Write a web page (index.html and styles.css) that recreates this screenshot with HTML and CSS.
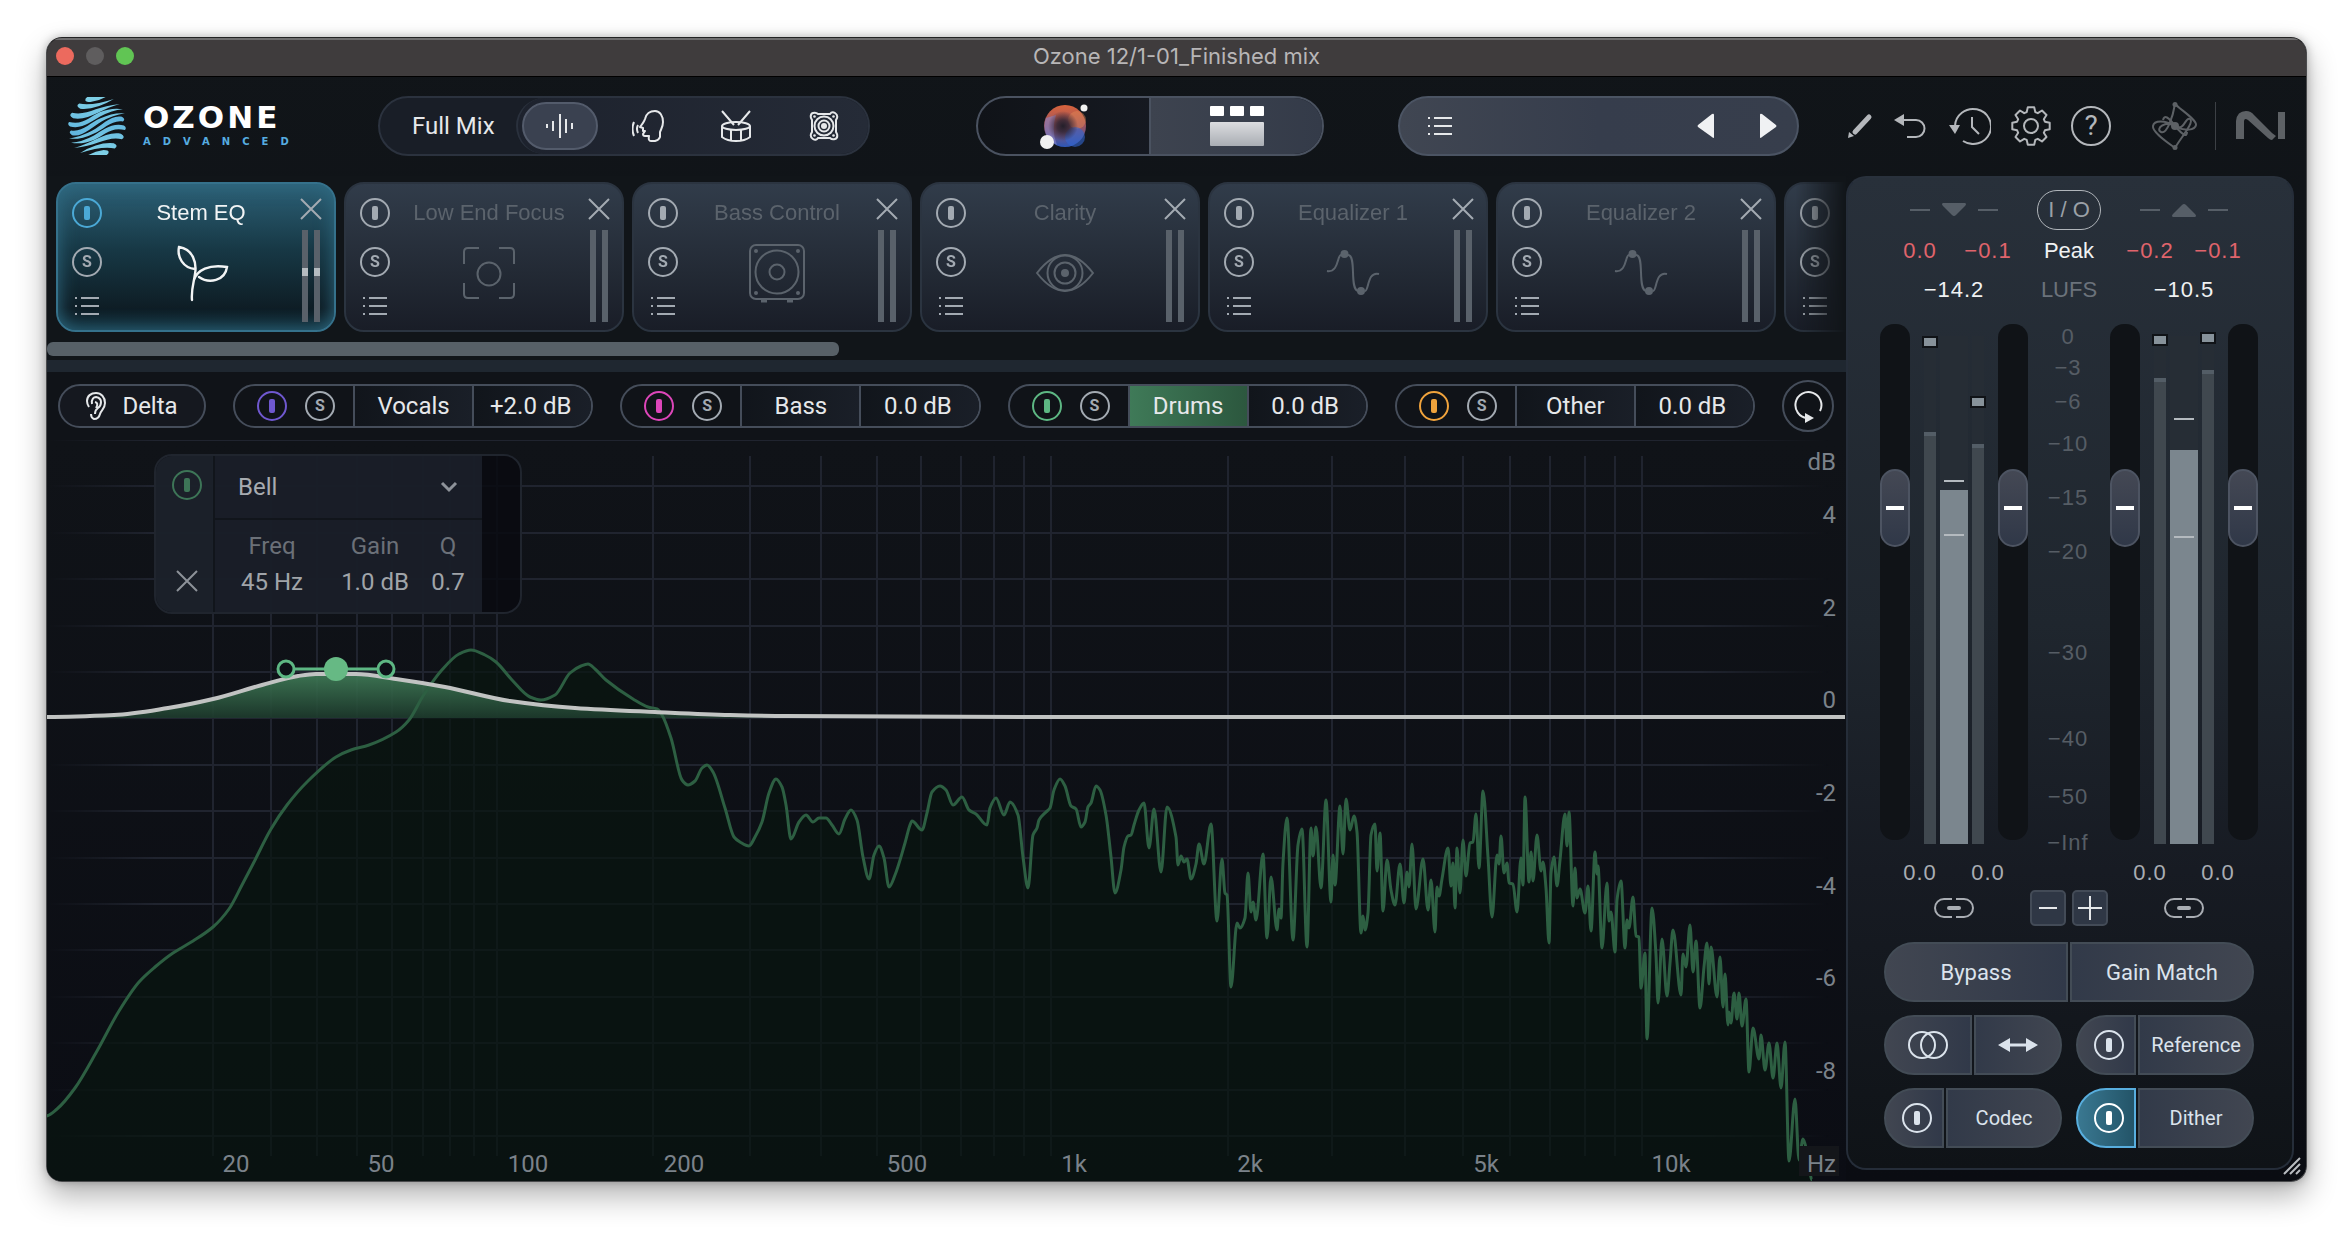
FILE: index.html
```
<!DOCTYPE html>
<html lang="en">
<head>
  <meta charset="UTF-8" />
  <meta name="viewport" content="width=device-width, initial-scale=1.0"/>
  <title>Ozone 12/1-01_Finished mix</title>
  <link rel="stylesheet" href="styles.css">
</head>
<body>
  <svg class="defs" aria-hidden="true">
    <symbol id="i-list" viewBox="0 0 24 20"><path d="M0 2h2M6 2h18M0 10h2M6 10h18M0 18h2M6 18h18" stroke="currentColor" stroke-width="2"/></symbol>
    <symbol id="i-close" viewBox="0 0 22 22"><path d="M1 1l20 20M21 1L1 21" stroke="currentColor" stroke-width="2"/></symbol>
    <symbol id="i-leaf" viewBox="0 0 60 60"><path d="M21 57C20 46 23 39 24 31C26 20 22 6 8 4C6 14 12 25 24 26M23 37C26 27 38 21 56 24C54 38 38 41 28 34" fill="none" stroke="currentColor" stroke-width="2.4" stroke-linecap="round"/></symbol>
    <symbol id="i-focus" viewBox="0 0 60 60"><g fill="none" stroke="currentColor" stroke-width="2"><path d="M5 21V9q0-4 4-4h11M40 5h11q4 0 4 4v12M55 40v11q0 4-4 4H40M20 55H9q-4 0-4-4V40"/><circle cx="30" cy="31" r="11.500"/></g></symbol>
    <symbol id="i-box" viewBox="0 0 60 60"><g fill="none" stroke="currentColor" stroke-width="2"><rect x="3" y="2" width="54" height="54" rx="6"/><circle cx="30" cy="29" r="21.500"/><circle cx="30" cy="29" r="7.500"/><path d="M14 58h6M40 58h6" stroke-width="3"/></g><g fill="currentColor"><circle cx="9" cy="8" r="2"/><circle cx="51" cy="8" r="2"/><circle cx="9" cy="50" r="2"/><circle cx="51" cy="50" r="2"/></g></symbol>
    <symbol id="i-eye" viewBox="0 0 60 60"><g fill="none" stroke="currentColor" stroke-width="2"><path d="M2 30Q16 12 30 12T58 30Q44 48 30 48T2 30z"/><circle cx="30" cy="30" r="17.500"/><circle cx="30" cy="30" r="10.500"/></g><circle cx="30" cy="30" r="4" fill="currentColor"/></symbol>
    <symbol id="i-eq" viewBox="0 0 60 60"><path d="M4 28C16 30 14 12 18 12M25 12C34 12 26 46 35 48M42 48C46 48 44 28 56 31" fill="none" stroke="currentColor" stroke-width="2"/><circle cx="21.500" cy="11" r="4" fill="currentColor"/><circle cx="38" cy="48" r="4" fill="currentColor"/></symbol>
    <symbol id="i-link" viewBox="0 0 40 20"><path d="M18 1h-8a9 9 0 0 0 0 18h8M22 1h8a9 9 0 0 1 0 18h-8" fill="none" stroke="currentColor" stroke-width="2"/><rect x="13" y="8" width="14" height="4" rx="2" fill="currentColor"/></symbol>
  </svg>

  <div class="window">
    <div class="titlebar">
      <div class="lights">
        <button class="light red" aria-label="Close window"></button>
        <button class="light gray" aria-label="Minimize window"></button>
        <button class="light green" aria-label="Zoom window"></button>
      </div>
      <span class="window-title">Ozone 12/1-01_Finished mix</span>
    </div>

    <header class="header">
      <div class="brand">
        <svg width="58" height="58" viewBox="0 0 57 57" aria-hidden="true">
          <defs>
            <linearGradient id="sphere" gradientUnits="userSpaceOnUse" x1="0" y1="0" x2="0" y2="57"><stop offset="0" stop-color="#7fd0e6"/><stop offset="1" stop-color="#4fa6da"/></linearGradient>
            <g id="waves">
              <path d="M19 0H37Q30 4 22 5Q17 5 17 3Q17 1 19 0z"/>
              <path d="M11 6.500Q24 9 45 2Q27 13 12 11.500Q7 9 11 6.500z"/>
              <path d="M4 15.500C18 19 28 9 51 7C34 11 20 24 5 21Q0 18 4 15.500z"/>
              <path d="M1 24.500C15 28 22 19 31 15Q43 10 54 12Q43 13 32 19C23 24 14 32 2 29Q-1 27 1 24.500z"/>
              <path d="M3 33C14 35 22 25 32 21Q44 15 56 16Q44 18 33 24C24 29 14 40 4 37.500Q0 35 3 33z"/>
            </g>
          </defs>
          <g fill="url(#sphere)"><use href="#waves"/><use href="#waves" transform="rotate(180 28.500 28.500)"/></g>
        </svg>
        <div class="brand-text">
          <span class="brand-name">OZONE</span>
          <span class="brand-tier">ADVANCED</span>
        </div>
      </div>

      <div class="stem-select">
        <span class="stem-label">Full Mix</span>
        <div class="stem-icons">
          <button class="stem-btn selected" aria-label="Full mix"><svg width="28" height="26" viewBox="0 0 28 26"><path d="M1 11v4M7 8v10M14 1v24M20 6v14M26 10v6" stroke="currentColor" stroke-width="2"/></svg></button>
          <button class="stem-btn" aria-label="Vocals"><svg width="32" height="32" viewBox="0 0 32 32"><path d="M13 9C14 4 18 1 23 1C28 1 31 6 31 12C31 17 29 19 28 22V27Q27 30 23 31H19Q16 31 17 26H13Q11 26 11 24L13 21L11 21V18L8 17Q12 12 13 9zM6 15q-2 4 0 8M2 12q-3 7 0 14" fill="none" stroke="currentColor" stroke-width="2" stroke-linejoin="round"/></svg></button>
          <button class="stem-btn" aria-label="Drums"><svg width="32" height="32" viewBox="0 0 32 32"><g fill="none" stroke="currentColor" stroke-width="2"><ellipse cx="16" cy="16" rx="14" ry="4"/><path d="M2 16v11q5 4 14 4t14-4V16M11 20v10M21 20v10M2 1l12 14M30 1L18 15"/></g></svg></button>
          <button class="stem-btn" aria-label="Bass"><svg width="30" height="30" viewBox="0 0 30 30"><g fill="none" stroke="currentColor" stroke-width="2"><path d="M9 3h12q2-3 5-1t2 5l-1 2v12l1 2q1 4-2 5t-5-1H9q-2 3-5 1t-2-5l1-2V9L2 7Q1 3 4 2t5 1z"/><circle cx="15" cy="15" r="9.500"/><circle cx="15" cy="15" r="5.500"/></g><circle cx="15" cy="15" r="3" fill="currentColor"/><g fill="currentColor"><circle cx="5.500" cy="5.500" r="1.300"/><circle cx="24.500" cy="5.500" r="1.300"/><circle cx="5.500" cy="24.500" r="1.300"/><circle cx="24.500" cy="24.500" r="1.300"/></g></svg></button>
        </div>
      </div>

      <div class="view-toggle">
        <button class="view-btn" aria-label="Assistant view">
          <svg width="50" height="48" viewBox="0 0 50 48">
            <defs>
              <linearGradient id="orb" x1="0" y1="0" x2="0" y2="1"><stop offset="0" stop-color="#d9643c"/><stop offset=".5" stop-color="#9a5360"/><stop offset="1" stop-color="#2c57b8"/></linearGradient>
              <radialGradient id="orb-core"><stop offset="0" stop-color="#231f2a"/><stop offset=".4" stop-color="#2a2230" stop-opacity=".8"/><stop offset="1" stop-color="#2a2230" stop-opacity="0"/></radialGradient>
            </defs>
            <circle cx="26" cy="24" r="21" fill="url(#orb)"/><circle cx="38" cy="18" r="9" fill="#e58a55" opacity=".45"/><circle cx="36" cy="35" r="10" fill="#3266d0" opacity=".6"/><path d="M7 16a21 21 0 0 0 11 27q-6-14-1-30z" fill="#8a86c8" opacity=".6"/><circle cx="24" cy="24" r="15" fill="url(#orb-core)"/>
            <circle cx="8" cy="40" r="7" fill="#f1f1f1"/><circle cx="45" cy="6" r="3.500" fill="#f1f1f1"/>
          </svg>
        </button>
        <button class="view-btn active" aria-label="Module view">
          <svg width="54" height="40" viewBox="0 0 54 40"><defs><linearGradient id="tile" x1="0" y1="0" x2="0" y2="1"><stop offset="0" stop-color="#dcdde0"/><stop offset="1" stop-color="#a9adb3"/></linearGradient></defs><rect width="14" height="10" rx="1" fill="#fff"/><rect x="20" width="14" height="10" rx="1" fill="#fff"/><rect x="40" width="14" height="10" rx="1" fill="#fff"/><rect y="16" width="54" height="24" rx="1" fill="url(#tile)"/></svg>
        </button>
      </div>

      <div class="preset">
        <button class="icon-btn" aria-label="Presets"><svg width="24" height="20"><use href="#i-list"/></svg></button>
        <div class="preset-nav">
          <button class="icon-btn" aria-label="Previous preset"><svg width="18" height="26" viewBox="0 0 18 26"><path d="M17 2v22q0 2-2 0L1 14q-1-1 0-2L15 1q2-1 2 1z" fill="#f0f1f3"/></svg></button>
          <button class="icon-btn" aria-label="Next preset"><svg width="18" height="26" viewBox="0 0 18 26"><path d="M1 2v22q0 2 2 0l14-10q1-1 0-2L3 1Q1 0 1 2z" fill="#f0f1f3"/></svg></button>
        </div>
      </div>

      <div class="tools">
        <button class="icon-btn" aria-label="Edit"><svg width="26" height="26" viewBox="0 0 26 26"><path d="M8 19L22 4" stroke="currentColor" stroke-width="5" stroke-linecap="round"/><path d="M2 19l5 4-6 2z" fill="currentColor"/></svg></button>
        <button class="icon-btn" aria-label="Undo"><svg width="34" height="26" viewBox="0 0 34 26"><path d="M9 7h14a8 8 0 0 1 0 17H14" fill="none" stroke="currentColor" stroke-width="2"/><path d="M1 7l10-6v12z" fill="currentColor"/></svg></button>
        <button class="icon-btn" aria-label="History"><svg width="42" height="38" viewBox="0 0 42 38"><path d="M6 19a18 17.500 0 1 1 8 15M23 10v10l7 7" fill="none" stroke="currentColor" stroke-width="2"/><path d="M0 18h11L6 27z" fill="currentColor"/></svg></button>
        <button class="icon-btn" aria-label="Settings"><svg width="40" height="40" viewBox="0 0 40 40"><g fill="none" stroke="currentColor" stroke-width="2" stroke-linejoin="round"><path id="gear"/><circle cx="20" cy="20" r="7"/></g></svg></button>
        <button class="icon-btn help" aria-label="Help">?</button>
      </div>

      <div class="marks">
        <svg width="48" height="48" viewBox="0 0 48 48" aria-hidden="true"><g fill="none" stroke="currentColor" stroke-width="2"><path d="M24 2C30 8 46 18 45 23S34 30 24 24S3 18 2 24S16 40 24 46"/><path d="M24 2C22 14 16 33 10 30S14 18 24 24S34 14 39 17S28 38 24 46"/><path d="M24 24Q14 10 12 18M24 24Q36 38 36 30"/></g><g fill="currentColor"><circle cx="24" cy="2.500" r="2.500"/><circle cx="24" cy="24" r="4"/><circle cx="24" cy="45.500" r="2.500"/></g></svg>
        <span class="rule"></span>
        <svg width="50" height="30" viewBox="0 0 50 30" aria-hidden="true"><path d="M0 28V10Q1 0 10 0Q15 0 18 4L36 22L40 25L36 29Q34 29 32 27L12 9Q8 6 8 11V28zM42 1h7v27h-7z" fill="currentColor"/></svg>
      </div>
    </header>

    <div class="main">
      <div class="workspace">
        <div class="modules" id="modules"></div>
        <div class="scroll-track"><div class="scroll-thumb"></div></div>
        <div class="band"></div>

        <div class="stems">
          <button class="delta"><svg width="20" height="28" viewBox="0 0 20 28"><path d="M3 15Q1 12 1 9C1 4 5 1 10 1S19 5 19 11C19 17 15 18 14 22C13 26 11 27 8 27Q5 26 5 22M6 12C5 7 8 5 10 5Q15 6 15 10T12 16Q9 18 9 22M9 10q4 1 1 6" fill="none" stroke="currentColor" stroke-width="2"/></svg>Delta</button>
          <div class="stem-groups" id="stems"></div>
          <button class="reset" aria-label="Reset"><svg width="30" height="34" viewBox="0 0 30 34"><path d="M27 22A13 13 0 1 0 14 29" fill="none" stroke="currentColor" stroke-width="2"/><path d="M12 24l9 5-9 5z" fill="currentColor"/></svg></button>
        </div>

        <div class="eq">
          <svg class="plot" id="plot" viewBox="1 0 1799 741" role="img" aria-label="Equalizer curve and spectrum">
            <defs>
              <linearGradient id="bell-fill" gradientUnits="userSpaceOnUse" x1="0" y1="232" x2="0" y2="278"><stop offset="0" stop-color="#42805a"/><stop offset="1" stop-color="#1d3a2c"/></linearGradient>
              <linearGradient id="fade"><stop offset="0" stop-color="#fff" stop-opacity="0"/><stop offset=".06" stop-color="#fff"/><stop offset=".92" stop-color="#fff"/><stop offset=".99" stop-color="#fff" stop-opacity="0"/></linearGradient>
              <mask id="edges"><rect width="1800" height="741" fill="url(#fade)"/></mask>
              <linearGradient id="plot-bg" x1="0" y1="0" x2="0" y2="1"><stop offset="0" stop-color="#101318"/><stop offset="1" stop-color="#0b0d14"/></linearGradient>
            </defs>
            <rect width="1800" height="741" fill="url(#plot-bg)"/>
            <g id="grid" class="grid" mask="url(#edges)"></g>
            <path id="spectrum-fill" class="spectrum-fill"/>
            <path id="bell-area" fill="url(#bell-fill)" opacity=".9"/>
            <path id="spectrum" class="spectrum"/>
            <path id="curve" class="curve"/>
            <g class="node">
              <path d="M240 229h100"/>
              <circle class="handle" cx="240" cy="229" r="8"/><circle class="handle" cx="340" cy="229" r="8"/>
              <circle class="knob" cx="290" cy="229" r="12"/>
            </g>
            <rect x="1753" y="706" width="40" height="30" fill="#14161a"/>
            <g id="labels" class="axis"></g>
          </svg>

          <div class="band-panel">
            <div class="band-side">
              <button class="power green-dim" aria-label="Band power"></button>
              <button class="icon-btn" aria-label="Remove band"><svg width="22" height="22"><use href="#i-close"/></svg></button>
            </div>
            <div class="band-body">
              <div class="band-type">
                <select aria-label="Filter type"><option>Bell</option></select>
                <svg width="18" height="12" viewBox="0 0 18 12" aria-hidden="true"><path d="M2 2l7 7 7-7" fill="none" stroke="currentColor" stroke-width="3"/></svg>
              </div>
              <div class="band-values">
                <label>Freq<input type="text" value="45 Hz"></label>
                <label>Gain<input type="text" value="1.0 dB"></label>
                <label>Q<input type="text" value="0.7"></label>
              </div>
            </div>
          </div>
        </div>
      </div>

      <aside class="io">
        <div class="io-grid">
          <div class="arrows"><i></i><svg width="24" height="14" viewBox="0 0 24 14"><path d="M1 0h22q2 1 0 3L14 12q-2 2-4 0L1 3q-2-2 0-3z" fill="currentColor"/></svg><i></i></div>
          <button class="io-btn">I / O</button>
          <div class="arrows"><i></i><svg width="24" height="14" viewBox="0 0 24 14"><path d="M1 14h22q2-1 0-3L14 2q-2-2-4 0L1 11q-2 2 0 3z" fill="currentColor"/></svg><i></i></div>

          <div class="pair clip"><span>0.0</span><span>−0.1</span></div>
          <span class="mode on">Peak</span>
          <div class="pair clip"><span>−0.2</span><span>−0.1</span></div>

          <span class="lufs">−14.2</span>
          <span class="mode">LUFS</span>
          <span class="lufs">−10.5</span>

          <div class="meters">
            <input class="fader" type="range" min="0" max="100" value="67" aria-label="Input left gain">
            <div class="levels">
              <div class="bar thin"><b style="height:412px"></b><u style="top:0px"></u></div>
              <div class="bar"><b style="height:354px"></b><s style="top:144px"></s><s style="top:198px"></s></div>
              <div class="bar thin"><b style="height:400px"></b><u style="top:60px"></u></div>
            </div>
            <input class="fader" type="range" min="0" max="100" value="67" aria-label="Input right gain">
          </div>
          <div class="scale" id="scale"></div>
          <div class="meters">
            <input class="fader" type="range" min="0" max="100" value="67" aria-label="Output left gain">
            <div class="levels">
              <div class="bar thin"><b style="height:466px"></b><u style="top:-2px"></u></div>
              <div class="bar"><b style="height:394px"></b><s style="top:82px"></s><s style="top:200px"></s></div>
              <div class="bar thin"><b style="height:474px"></b><u style="top:-4px"></u></div>
            </div>
            <input class="fader" type="range" min="0" max="100" value="67" aria-label="Output right gain">
          </div>

          <div class="pair gains"><span>0.0</span><span>0.0</span></div>
          <span></span>
          <div class="pair gains"><span>0.0</span><span>0.0</span></div>

          <button class="icon-btn link" aria-label="Link input gains"><svg width="40" height="20"><use href="#i-link"/></svg></button>
          <div class="zoom">
            <button aria-label="Zoom out"><svg width="24" height="24" viewBox="0 0 24 24"><path d="M3 12h18" stroke="currentColor" stroke-width="2"/></svg></button>
            <button aria-label="Zoom in"><svg width="24" height="24" viewBox="0 0 24 24"><path d="M0 12h24M12 0v24" stroke="currentColor" stroke-width="2"/></svg></button>
          </div>
          <button class="icon-btn link" aria-label="Link output gains"><svg width="40" height="20"><use href="#i-link"/></svg></button>
        </div>

        <div class="actions">
          <div class="split wide"><button>Bypass</button><button>Gain Match</button></div>
          <div class="split">
            <button aria-label="Stereo"><svg width="40" height="28" viewBox="0 0 40 28"><g fill="none" stroke="currentColor" stroke-width="2"><circle cx="14" cy="14" r="13"/><circle cx="26" cy="14" r="13"/></g></svg></button>
            <button aria-label="Swap channels"><svg width="40" height="16" viewBox="0 0 40 16"><path d="M8 8h24" stroke="currentColor" stroke-width="3"/><path d="M0 8L12 1v14zM40 8L28 1v14z" fill="currentColor"/></svg></button>
          </div>
          <div class="split narrow"><button aria-label="Reference power"><span class="power"></span></button><button>Reference</button></div>
          <div class="split narrow"><button aria-label="Codec power"><span class="power"></span></button><button>Codec</button></div>
          <div class="split narrow"><button class="lit" aria-label="Dither power"><span class="power"></span></button><button>Dither</button></div>
        </div>
      </aside>
    </div>
    <svg class="grip" width="18" height="18" viewBox="0 0 18 18" aria-hidden="true"><path d="M1 17L17 1M7 17L17 7M13 17l4-4" stroke="#b9bcc0" stroke-width="2"/></svg>
  </div>

  <script src="script.js"></script>
</body>
</html>
```
FILE: styles.css
```
* {
  box-sizing: border-box;
}

body {
  margin: 0;
  padding: 37px 45px 53px 46px;
  background: #fff;
  font-family: Roboto, "Liberation Sans", sans-serif;
  font-size: 24px;
  color: #e6e8ea;
}

button, input, select {
  margin: 0;
  padding: 0;
  border: none;
  background: none;
  color: inherit;
  font: inherit;
}

button {
  display: flex;
  align-items: center;
  justify-content: center;
  cursor: pointer;
}

svg {
  display: block;
}

.defs {
  position: absolute;
  width: 0;
  height: 0;
}

.window {
  position: relative;
  overflow: hidden;
  border: 1px solid #4a4b4d;
  border-top-color: #232324;
  border-radius: 16px;
  background: linear-gradient(#111519, #0a0c12);
  box-shadow: 0 14px 30px rgba(0, 0, 0, 0.3), 0 0 10px rgba(0, 0, 0, 0.25);
}

/* title bar */
.titlebar {
  display: grid;
  grid-template-columns: 1fr auto 1fr;
  align-items: center;
  height: 39px;
  padding: 0 9px 2px;
  border-bottom: 1px solid #000;
  background: #3f3c3d;
  box-shadow: inset 0 2px #6f6e6f;
}

.lights {
  display: flex;
  gap: 12px;
}

.light {
  width: 18px;
  height: 18px;
  border-radius: 50%;
}

.red { background: #ec6a5e; }
.gray { background: #5f5d5e; }
.green { background: #61c554; }

.window-title {
  font-family: Inter, sans-serif;
  font-size: 22px;
  color: #b8b6b7;
}

/* header */
.header {
  display: flex;
  align-items: center;
  height: 99px;
  padding: 0 20px 2px 21px;
}

.brand {
  display: flex;
  align-items: center;
  gap: 17px;
  width: 310px;
}

.brand-text {
  display: flex;
  flex-direction: column;
  gap: 6px;
}

.brand-name {
  font: bold 31px/26px "DejaVu Sans", sans-serif;
  letter-spacing: 3px;
  color: #fff;
}

.brand-tier {
  font: bold 10px/12px "DejaVu Sans", sans-serif;
  letter-spacing: 12px;
  color: #56ace0;
}

.stem-select {
  display: flex;
  align-items: center;
  width: 492px;
  height: 60px;
  margin-right: 106px;
  border: 2px solid #2b323e;
  border-radius: 30px;
  background: #191e27;
}

.stem-label {
  flex: 1;
  padding-left: 32px;
}

.stem-icons {
  display: flex;
  align-items: center;
  gap: 12px;
  height: 56px;
  padding: 0 6px 0 4px;
  border: 2px solid #2a313d;
  border-width: 0 0 0 2px;
  border-radius: 28px;
  background: linear-gradient(90deg, #1d222d, #252b37);
}

.stem-btn {
  width: 76px;
  height: 48px;
  border-radius: 24px;
}

.stem-btn.selected {
  border: 2px solid #535b6b;
  background: #3a4150;
}

.view-toggle {
  display: flex;
  width: 348px;
  height: 60px;
  margin-right: 74px;
  overflow: hidden;
  border: 2px solid #4a5260;
  border-radius: 30px;
  background: linear-gradient(90deg, #101318, #1b1f2a);
}

.view-btn {
  flex: 1;
}

.view-btn.active {
  border-left: 2px solid #4a5260;
  background: linear-gradient(90deg, #3d434f, #343b49);
}

.preset {
  display: flex;
  flex: 1;
  align-items: center;
  justify-content: space-between;
  height: 60px;
  padding: 0 20px 0 28px;
  border: 2px solid #4b5463;
  border-radius: 30px;
  background: linear-gradient(90deg, #404652, #363d4c 50%, #373e4c);
}

.preset-nav {
  display: flex;
  gap: 44px;
}

.tools {
  display: flex;
  align-items: center;
  gap: 20px;
  margin-left: 48px;
  color: #b4b7bb;
}

.tools .icon-btn:nth-child(3) {
  margin-left: 2px;
}

.help {
  width: 40px;
  height: 40px;
  border: 2px solid #b4b7bb;
  border-radius: 50%;
  font-size: 28px;
}

.marks {
  display: flex;
  align-items: center;
  gap: 16px;
  margin-left: 40px;
  color: #5d6165;
}

.rule {
  width: 1px;
  height: 48px;
  margin-right: 4px;
  background: #3c4045;
}

/* layout */
.main {
  display: grid;
  grid-template-columns: minmax(0, 1fr) 448px;
  align-items: start;
  padding-right: 12px;
}

.workspace {
  background: #111519;
}

/* module chain */
.modules {
  display: flex;
  gap: 8px;
  padding: 6px 0 10px 9px;
  overflow: hidden;
  -webkit-mask-image: linear-gradient(90deg, #000 calc(100% - 50px), transparent);
  mask-image: linear-gradient(90deg, #000 calc(100% - 50px), transparent);
}

.module {
  display: flex;
  flex: none;
  justify-content: space-between;
  width: 280px;
  height: 150px;
  padding: 14px 12px 8px 14px;
  border: 2px solid #2b3440;
  border-radius: 20px;
  background: linear-gradient(#313c4a, #232a35 60%, #191d27);
  color: #a3aab2;
}

.module.active {
  border-color: #35718b;
  background: linear-gradient(#2c6076, #173845 45%, #0e1d25 85%, #12303c);
  box-shadow: inset 0 0 18px #2f6b83;
}

.module-side {
  display: flex;
  flex-direction: column;
  align-items: center;
  gap: 19px;
}

.module-center {
  display: flex;
  flex: 1;
  flex-direction: column;
  align-items: center;
  gap: 15px;
  color: #5b636c;
}

.module-title {
  font: 22px/30px "Liberation Sans", sans-serif;
  white-space: nowrap;
}

.module.active .module-center {
  color: #f2f4f5;
}

.module-meters {
  display: flex;
  gap: 6px;
  padding-top: 10px;
}

.module-meters i {
  width: 6px;
  height: 92px;
  background: #59616a;
}

.module.active .module-meters i {
  background: linear-gradient(#59616a 38px, #b5bbc0 38px, #b5bbc0 46px, #59616a 46px);
}

.module-right {
  display: flex;
  flex-direction: column;
  align-items: center;
}

.power, .solo {
  display: flex;
  flex: none;
  align-items: center;
  justify-content: center;
  width: 30px;
  height: 30px;
  border: 2px solid currentColor;
  border-radius: 50%;
}

.power::before {
  content: "";
  width: 6px;
  height: 14px;
  border-radius: 2px;
  background: currentColor;
}

.solo {
  color: #a3aab2;
  font: bold 16px/26px Roboto, sans-serif;
}

.module.active .power { color: #4ba9d6; }
.green-dim { color: #3d7557; }

.scroll-track {
  height: 18px;
}

.scroll-thumb {
  width: 44%;
  height: 14px;
  border-radius: 6px;
  background: #576067;
}

.band {
  height: 12px;
  background: #1f2730;
}

/* stem strip */
.stems {
  display: flex;
  align-items: center;
  gap: 27px;
  height: 68px;
  padding: 0 12px 0 11px;
  background: #101318;
}

.delta {
  gap: 16px;
  width: 148px;
  height: 44px;
  border: 2px solid #454d5a;
  border-radius: 22px;
  background: #15181f;
}

.stem-groups {
  display: flex;
  flex: 1;
  gap: 27px;
}

.stem {
  display: grid;
  flex: 1;
  grid-template-columns: 118px 1fr 1fr;
  height: 44px;
  overflow: hidden;
  border: 2px solid #454d5a;
  border-radius: 22px;
}

.stem-switches {
  display: flex;
  align-items: center;
  gap: 18px;
  padding-left: 22px;
}

.stem-name, .stem input {
  min-width: 0;
  border-left: 2px solid #454d5a;
  background: linear-gradient(90deg, #11151b, #1a1f28);
  text-align: center;
}

.stem input {
  padding-right: 4px;
}

.stem.current .stem-name {
  background: linear-gradient(90deg, #3f7a58, #2c573e);
}

.purple { color: #6f58cf; }
.pink { color: #dd46b9; }
.mint { color: #5db783; }
.orange { color: #f0a33c; }

.reset {
  width: 52px;
  height: 52px;
  border: 2px solid #454d5a;
  border-radius: 50%;
}

/* equalizer */
.eq {
  position: relative;
}

.plot {
  width: 100%;
  height: auto;
}

.grid path {
  fill: none;
  stroke: #20242f;
  stroke-width: 2;
}

.spectrum-fill {
  fill: #08150f;
  fill-opacity: 0.7;
}

.spectrum {
  fill: none;
  stroke: #2d5f42;
  stroke-width: 3;
  stroke-linejoin: round;
}

.curve {
  fill: none;
  stroke: #c1c3c2;
  stroke-width: 4;
}

.node path {
  stroke: #5db783;
  stroke-width: 3;
}

.handle {
  fill: #0d1117;
  stroke: #5db783;
  stroke-width: 3;
}

.knob {
  fill: #66b984;
}

.axis text {
  fill: #7b828a;
  font-size: 24px;
}

.band-panel {
  position: absolute;
  top: 14px;
  left: 107px;
  display: flex;
  width: 368px;
  height: 160px;
  overflow: hidden;
  border: 2px solid #20252e;
  border-radius: 18px;
  background: rgba(9, 11, 16, 0.85);
  color: #8d9299;
}

.band-side {
  display: flex;
  flex-direction: column;
  align-items: center;
  justify-content: space-between;
  width: 59px;
  padding: 14px 0 20px 4px;
  border-right: 2px solid #11151b;
  background: rgba(30, 37, 46, 0.85);
}

.band-body {
  width: 267px;
  background: rgba(28, 33, 43, 0.85);
}

.band-type {
  display: flex;
  align-items: center;
  justify-content: space-between;
  height: 64px;
  padding: 0 24px 0 23px;
  border-bottom: 2px solid #11151b;
}

.band-type select {
  flex: 1;
  appearance: none;
  outline: none;
  color: #a7abb0;
}

.band-values {
  display: grid;
  grid-template-columns: 114px 92px 54px;
  padding-top: 10px;
}

.band-values label {
  display: flex;
  flex-direction: column;
  align-items: center;
  gap: 4px;
  color: #6b7078;
  line-height: 32px;
}

.band-values input {
  width: 100%;
  height: 32px;
  color: #a0a4a9;
  text-align: center;
}

/* input / output panel */
.io {
  height: 994px;
  padding: 12px 34px 0 32px;
  border: 2px solid #252d39;
  border-top-color: #29313c;
  border-radius: 20px;
  background: linear-gradient(#28303a, #1f262e 45%, #171b23 70%, #0f1317);
  font: 22px "Liberation Sans", sans-serif;
}

.io-grid {
  display: grid;
  grid-template-columns: 148px 1fr 148px;
  grid-template-rows: 40px 42px 36px 536px 46px 36px;
  align-items: center;
  justify-items: center;
}

.arrows {
  display: flex;
  align-items: center;
  gap: 12px;
  color: #565e67;
}

.arrows i {
  width: 20px;
  height: 2px;
  background: #565e67;
}

.io-btn {
  width: 64px;
  height: 40px;
  border: 1px solid #b0b5ba;
  border-radius: 20px;
  color: #9aa0a7;
  white-space: nowrap;
}

.pair {
  display: grid;
  grid-template-columns: 68px 68px;
  text-align: center;
  letter-spacing: 1px;
}

.clip {
  color: #e0646c;
}

.gains {
  align-self: end;
  padding-bottom: 4px;
  color: #a9adb3;
}

.mode {
  color: #6b727b;
}

.mode.on, .lufs {
  color: #f0f2f3;
}

.lufs {
  letter-spacing: 1px;
}

.meters, .scale {
  align-self: end;
}

.meters {
  display: flex;
  justify-content: space-between;
  width: 148px;
}

.fader {
  width: 30px;
  height: 516px;
  appearance: none;
  -webkit-appearance: none;
  writing-mode: vertical-lr;
  direction: rtl;
  border-radius: 14px;
  background: #101317;
}

.fader::-webkit-slider-thumb {
  -webkit-appearance: none;
  width: 30px;
  height: 78px;
  border: 2px solid #4d5462;
  border-radius: 15px;
  background: linear-gradient(#fff, #fff) center / 18px 4px no-repeat, linear-gradient(#444854, #303848);
}

.levels {
  display: flex;
  gap: 4px;
  padding-top: 12px;
}

.bar {
  position: relative;
  width: 28px;
  height: 508px;
  background: #262d35;
}

.bar b {
  position: absolute;
  bottom: 0;
  left: 0;
  width: 100%;
  background: #7b868e;
}

.bar s {
  position: absolute;
  left: 4px;
  width: 20px;
  height: 2px;
  background: #b4babf;
}

.bar.thin {
  width: 12px;
}

.thin b {
  border-top: 4px solid #535d66;
  background: #40484f;
}

.thin u {
  position: absolute;
  left: -2px;
  width: 16px;
  height: 12px;
  border: 2px solid #101317;
  background: #87929a;
}

.scale {
  position: relative;
  width: 82px;
  height: 520px;
  color: #565d65;
  letter-spacing: 1px;
}

.scale span {
  position: absolute;
  left: 0;
  width: 80px;
  line-height: 24px;
  text-align: center;
}

.link {
  align-self: start;
  padding-top: 8px;
  color: #a9adb3;
}

.zoom {
  display: flex;
  gap: 6px;
}

.zoom button {
  width: 36px;
  height: 36px;
  border: 2px solid #434b57;
  border-radius: 5px;
  background: #2f3745;
}

.actions {
  display: grid;
  grid-template-columns: 1fr 1fr;
  gap: 13px 14px;
  padding: 16px 4px 0;
  font: 20px Roboto, sans-serif;
  color: #dbe3ec;
}

.split {
  display: grid;
  grid-template-columns: 1fr 1fr;
  gap: 2px;
}

.split.wide {
  grid-column: span 2;
  font-size: 22px;
}

.split.narrow {
  grid-template-columns: 60px 1fr;
}

.split button {
  height: 60px;
  border: 2px solid #434c56;
  background: linear-gradient(90deg, #414651, #313949);
}

.split button:first-child {
  border-radius: 30px 0 0 30px;
}

.split button:last-child {
  border-radius: 0 30px 30px 0;
  background: linear-gradient(90deg, #323a49, #414651);
}

.narrow button:first-child {
  padding-left: 6px;
}

.split button.lit {
  border-color: #58aede;
  background: linear-gradient(90deg, #3a7891, #235468);
  color: #fff;
}

.grip {
  position: absolute;
  right: 5px;
  bottom: 6px;
}
```
FILE: script.js
```
const modules = [
  { name: "Stem EQ", icon: "leaf", active: true },
  { name: "Low End Focus", icon: "focus" },
  { name: "Bass Control", icon: "box" },
  { name: "Clarity", icon: "eye" },
  { name: "Equalizer 1", icon: "eq" },
  { name: "Equalizer 2", icon: "eq" },
  { name: "", icon: "" }
];

document.getElementById("modules").innerHTML = modules.map(m => `
  <section class="module ${m.active ? "active" : ""}">
    <div class="module-side">
      <button class="power" aria-label="Power ${m.name}"></button>
      <button class="solo" aria-label="Solo ${m.name}">S</button>
      <button aria-label="Presets ${m.name}"><svg width="24" height="20"><use href="#i-list"/></svg></button>
    </div>
    <div class="module-center">
      <span class="module-title">${m.name}</span>
      ${m.icon ? `<svg width="60" height="60"><use href="#i-${m.icon}"/></svg>` : ""}
    </div>
    <div class="module-right">
      <button aria-label="Remove ${m.name}"><svg width="22" height="22"><use href="#i-close"/></svg></button>
      <div class="module-meters"><i></i><i></i></div>
    </div>
  </section>`).join("");

const stems = [
  { name: "Vocals", color: "purple", gain: "+2.0 dB" },
  { name: "Bass", color: "pink", gain: "0.0 dB" },
  { name: "Drums", color: "mint", gain: "0.0 dB", current: true },
  { name: "Other", color: "orange", gain: "0.0 dB" }
];

document.getElementById("stems").innerHTML = stems.map(s => `
  <div class="stem ${s.current ? "current" : ""}">
    <div class="stem-switches">
      <button class="power ${s.color}" aria-label="${s.name} power"></button>
      <button class="solo" aria-label="${s.name} solo">S</button>
    </div>
    <button class="stem-name">${s.name}</button>
    <input type="text" value="${s.gain}" aria-label="${s.name} gain">
  </div>`).join("");

// settings icon: eight teeth around the hub
const teeth = [];
for (let i = 0; i < 8; i++) {
  [[-0.3, 14.5], [-0.17, 19], [0.17, 19], [0.3, 14.5]].forEach(([a, r]) => {
    const t = i * Math.PI / 4 + a;
    teeth.push(`${(20 + r * Math.sin(t)).toFixed(1)} ${(20 - r * Math.cos(t)).toFixed(1)}`);
  });
}
document.getElementById("gear").setAttribute("d", `M${teeth.join("L")}z`);

// meter scale: label and distance from the top of the fader slot
const scale = [["0", 13], ["−3", 44], ["−6", 78], ["−10", 120], ["−15", 174], ["−20", 228],
  ["−30", 329], ["−40", 415], ["−50", 473], ["−Inf", 519]];
document.getElementById("scale").innerHTML =
  scale.map(([t, y]) => `<span style="top:${y - 12}px">${t}</span>`).join("");

// grid: one row per dB, columns on a log scale
const rows = Array.from({ length: 16 }, (_, i) => Math.round(i * 46.4));
const cols = [167, 225, 271, 311, 346, 377, 404, 428, 451, 607, 704, 775, 831, 875, 915, 948, 978, 1005,
  1182, 1286, 1359, 1417, 1464, 1504, 1539, 1569, 1596];
document.getElementById("grid").innerHTML =
  rows.map(y => `<path d="M0 ${y}H1800V${y + 0.01}"/>`).join("") +
  cols.map(x => `<path d="M${x} 16V716"/>`).join("");

const freqs = [["20", 190], ["50", 335], ["100", 482], ["200", 638], ["500", 861], ["1k", 1028],
  ["2k", 1204], ["5k", 1440], ["10k", 1625]];
const gains = [["dB", 30], ["4", 83], ["2", 176], ["0", 268], ["-2", 361], ["-4", 454], ["-6", 546], ["-8", 639], ["Hz", 732]];
document.getElementById("labels").innerHTML =
  freqs.map(([t, x]) => `<text x="${x}" y="732" text-anchor="middle">${t}</text>`).join("") +
  gains.map(([t, y]) => `<text x="1790" y="${y}" text-anchor="end">${t}</text>`).join("");

// monotone cubic, so peaks stay where the data puts them
function smooth(p) {
  const slope = p.map((q, i) => {
    if (i === 0 || i === p.length - 1) return 0;
    const a = (q[1] - p[i - 1][1]) / (q[0] - p[i - 1][0]);
    const b = (p[i + 1][1] - q[1]) / (p[i + 1][0] - q[0]);
    return a * b <= 0 ? 0 : 2 * a * b / (a + b);
  });
  let d = `M${p[0]}`;
  for (let i = 1; i < p.length; i++) {
    const h = (p[i][0] - p[i - 1][0]) / 3;
    d += `C${p[i - 1][0] + h} ${p[i - 1][1] + slope[i - 1] * h} ${p[i][0] - h} ${p[i][1] - slope[i] * h} ${p[i]}`;
  }
  return d;
}

const points = s => s.trim().split(/\s+/).map(q => q.split(",").map(Number));

const spectrum = points(`
  0,676 11,669 29,648 51,611 73,571 93,542 109,527 127,513 147,501 167,487 183,469 196,445 207,424 225,389
  241,365 261,342 290,317 305,310 323,305 350,292 363,280 377,256 395,231 413,214 425,210 439,215 450,222
  466,240 484,257 495,260 509,255 524,233 535,226 542,224 549,229 560,240 587,259 602,267 611,269 616,275
  625,298 636,340 642,345 649,341 656,328 661,325 667,332 679,368 688,397 694,402 703,406 709,397 716,382
  723,353 730,339 736,347 740,365 745,399 753,382 760,375 767,382 773,378 780,378 786,385 793,394 799,379
  805,370 811,380 817,417 823,439 828,415 833,406 838,418 843,447 849,435 859,403 864,385 866,381 876,390
  881,373 886,352 894,346 900,350 907,365 916,357 923,370 930,374 941,385 944,368 950,358 958,375 964,362
  972,375 977,417 982,448 987,395 991,388 993,380 1000,372 1004,368 1008,350 1014,339 1019,346 1025,366
  1030,369 1035,387 1039,382 1042,367 1045,363 1050,346 1054,350 1060,375 1065,417 1069,453 1075,430
  1078,407 1082,396 1085,395 1088,385 1093,370 1098,363 1103,408 1108,369 1115,432 1121,367 1130,397
  1132,425 1135,416 1138,422 1141,419 1145,439 1150,424 1153,404 1158,424 1165,384 1171,481 1176,419
  1179,453 1181,455 1185,547 1191,483 1194,488 1199,478 1202,433 1205,472 1207,462 1210,480 1217,414
  1221,498 1225,437 1231,490 1233,469 1235,478 1237,423 1241,378 1247,500 1252,405 1256,389 1261,507
  1265,388 1267,416 1270,387 1275,448 1280,360 1285,462 1287,415 1289,445 1294,366 1297,414 1300,359
  1304,390 1308,376 1311,392 1315,493 1317,476 1319,490 1322,473 1325,395 1329,384 1331,431 1334,393
  1337,471 1341,420 1345,450 1349,465 1354,424 1358,463 1361,432 1363,447 1366,404 1370,469 1377,419
  1382,470 1385,440 1389,492 1391,447 1393,456 1396,439 1402,408 1405,446 1407,423 1409,468 1411,408
  1414,453 1417,400 1420,436 1424,403 1427,402 1430,374 1433,428 1437,351 1442,417 1446,477 1451,415
  1453,424 1455,396 1458,433 1461,423 1463,443 1467,444 1471,472 1475,418 1477,445 1479,357 1483,442
  1485,412 1487,441 1491,395 1495,431 1497,422 1500,448 1503,503 1505,433 1508,417 1511,446 1514,420
  1519,374 1521,406 1523,372 1527,466 1529,428 1531,458 1534,449 1539,473 1542,446 1545,491 1549,412
  1551,434 1552,426 1556,508 1561,443 1563,481 1565,472 1569,512 1571,460 1575,441 1579,508 1581,480
  1583,488 1587,457 1590,496 1593,497 1595,548 1599,513 1601,599 1606,468 1610,515 1612,563 1616,499
  1621,556 1624,523 1627,490 1635,555 1637,514 1640,527 1644,485 1647,532 1650,501 1654,568 1658,527
  1661,503 1663,544 1665,507 1671,557 1674,517 1677,567 1679,534 1682,585 1683,572 1685,583 1688,553
  1691,579 1693,553 1696,586 1700,559 1703,632 1707,588 1713,619 1715,595 1719,630 1723,603 1727,638
  1731,603 1735,648 1739,602 1743,721 1749,659 1753,720 1757,699 1761,712 1766,740`);

const eq = points(`
  0,277 68,275 122,268 167,259 216,245 252,236 270,234 310,234 350,239 399,247 464,261 529,268 609,272
  684,275 742,276 979,277 1799,277`);

const line = smooth(spectrum);
const bell = smooth(eq);
document.getElementById("spectrum").setAttribute("d", line);
document.getElementById("spectrum-fill").setAttribute("d", line + "V741H0z");
document.getElementById("curve").setAttribute("d", bell);
document.getElementById("bell-area").setAttribute("d", bell + "V278H0z");
```
